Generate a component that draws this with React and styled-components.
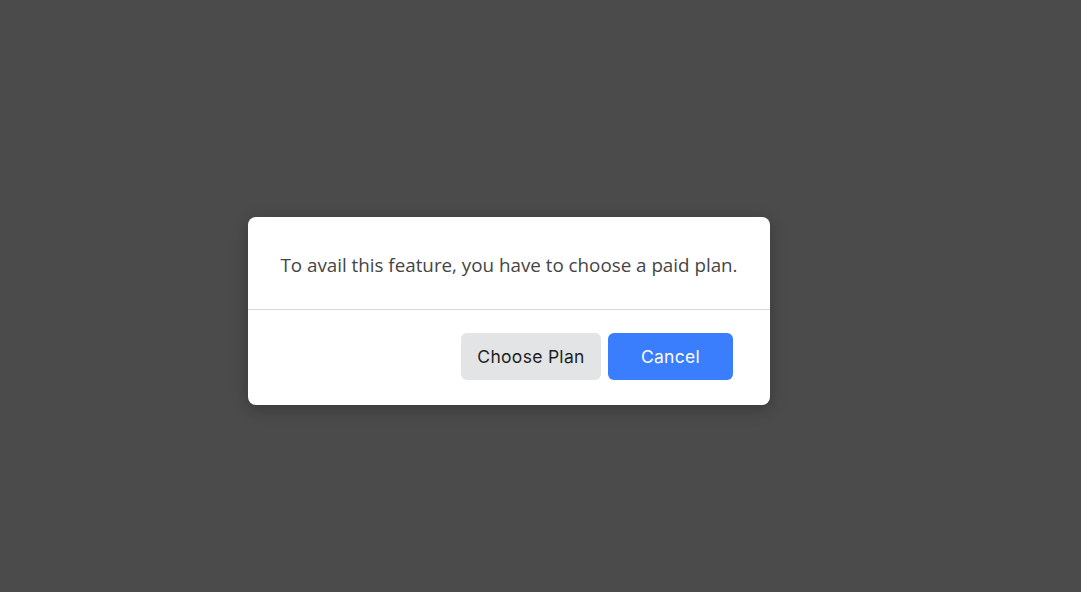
import React from "react";
import styled, { createGlobalStyle } from "styled-components";

const GlobalStyle = createGlobalStyle`
  html, body {
    margin: 0;
    padding: 0;
    height: 100%;
    background: #4b4b4b;
  }
  #root {
    height: 100%;
  }
`;

const Backdrop = styled.div`
  box-sizing: border-box;
  width: 100%;
  height: 100%;
  background: #4b4b4b;
  padding: 217px 0 0 248px;
`;

const Modal = styled.div`
  width: 522px;
  background: #fff;
  border-radius: 8px;
  box-shadow: 0 4px 16px rgba(0, 0, 0, 0.25);
  overflow: hidden;
`;

const Body = styled.div`
  height: 93px;
  display: flex;
  align-items: center;
  justify-content: center;
  border-bottom: 1px solid #d9d9d9;
  box-sizing: border-box;
`;

const Message = styled.p`
  margin: 4px 0 0;
  font-family: "Open Sans", "Noto Sans", sans-serif;
  font-size: 18.8px;
  color: #454545;
`;

const Footer = styled.div`
  display: flex;
  justify-content: flex-end;
  gap: 7px;
  padding: 23px 37px 25px 0;
`;

const Button = styled.button`
  height: 47px;
  width: ${(p) => p.$width}px;
  border: none;
  border-radius: 6px;
  font-family: "Inter", "Noto Sans", sans-serif;
  font-size: 17.5px;
  letter-spacing: 0.3px;
  background: ${(p) => (p.$primary ? "#3a7dfd" : "#e3e4e6")};
  color: ${(p) => (p.$primary ? "#ffffff" : "#1f1f1f")};
  cursor: pointer;
`;

export default function App() {
  return (
    <>
      <GlobalStyle />
      <Backdrop>
        <Modal>
          <Body>
            <Message>To avail this feature, you have to choose a paid plan.</Message>
          </Body>
          <Footer>
            <Button $width={140}>Choose Plan</Button>
            <Button $width={125} $primary>
              Cancel
            </Button>
          </Footer>
        </Modal>
      </Backdrop>
    </>
  );
}
